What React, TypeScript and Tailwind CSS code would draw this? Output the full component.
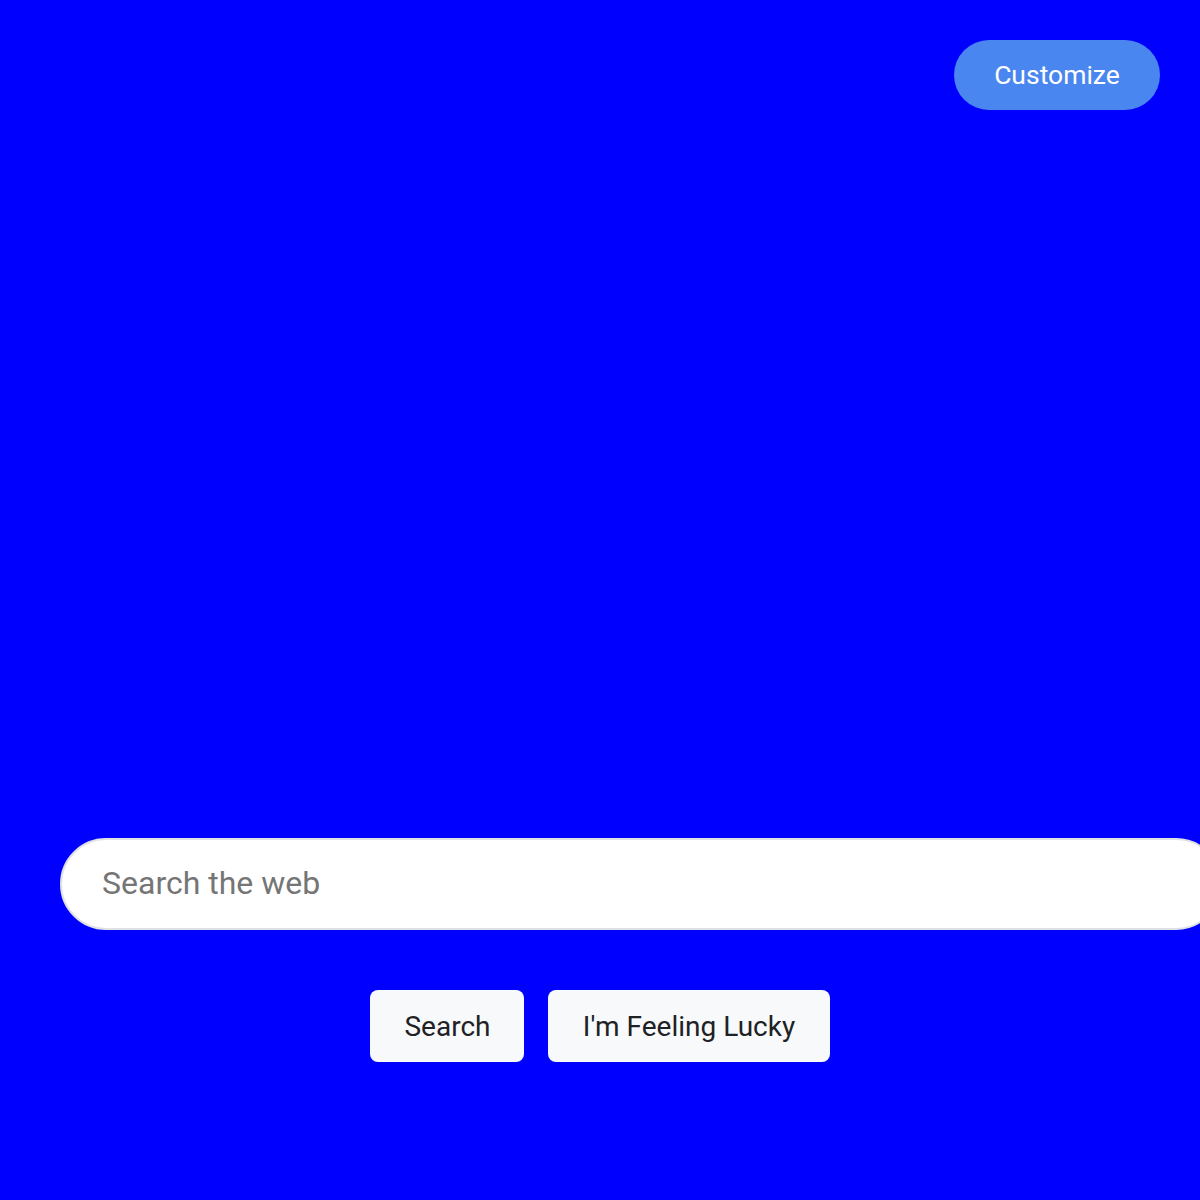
import React from "react";

export default function App() {
  return (
    <div
      className="w-[1200px] h-[1200px] bg-[#0000ff] overflow-hidden flex flex-col"
      style={{ fontFamily: "Roboto, 'Noto Sans', sans-serif" }}
    >
      <div className="flex justify-end pt-[40px] pr-[40px]">
        <button className="w-[206px] h-[70px] rounded-full bg-[#4a86f0] text-white text-[26.5px] leading-none flex items-center justify-center">
          Customize
        </button>
      </div>
      <div className="mt-[728px] pl-[60px]">
        <div className="w-[1162px] h-[92px] rounded-full bg-white border-2 border-[#dfe1e5] flex items-center pl-[40px] shrink-0">
          <input
            className="w-full bg-transparent outline-none text-[32px] leading-none text-[#202124] placeholder:text-[#757575] -mt-[2px]"
            placeholder="Search the web"
          />
        </div>
      </div>
      <div className="mt-[60px] flex justify-center gap-[24px]">
        <button className="w-[154px] h-[72px] rounded-[8px] bg-[#f8f9fa] text-[#202124] text-[28px] flex items-center justify-center pt-[1px] pl-[1px]">
          Search
        </button>
        <button className="w-[282px] h-[72px] rounded-[8px] bg-[#f8f9fa] text-[#202124] text-[28px] flex items-center justify-center pt-[1px]">
          I'm Feeling Lucky
        </button>
      </div>
    </div>
  );
}
